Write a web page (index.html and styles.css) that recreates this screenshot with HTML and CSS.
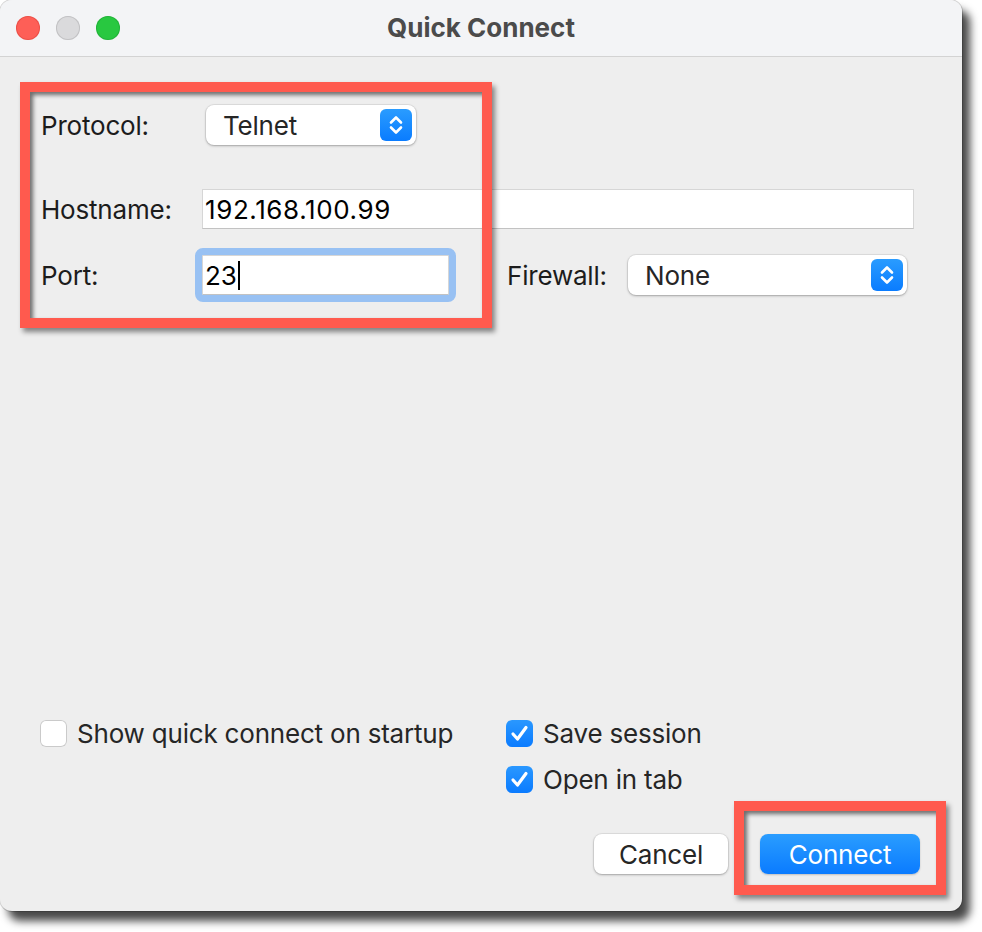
FILE: index.html
```html
<!DOCTYPE html>
<html>
<head>
<meta charset="utf-8">
<link rel="stylesheet" href="styles.css">
</head>
<body>
<div class="window">
  <div class="titlebar">
    <div class="lights">
      <span class="light red"></span>
      <span class="light gray"></span>
      <span class="light green"></span>
    </div>
    <div class="title">Quick Connect</div>
    <div></div>
  </div>
  <div class="content">
    <div class="row row1">
      <span class="label">Protocol:</span>
      <div class="popup popup-protocol">
        <span class="popup-text">Telnet</span>
        <span class="stepper"><svg width="32" height="32" viewBox="0 0 32 32"><path d="M11 13.5 L16 8.5 L21 13.5 M11 18.5 L16 23.5 L21 18.5" fill="none" stroke="#fff" stroke-width="2.6" stroke-linecap="round" stroke-linejoin="round"/></svg></span>
      </div>
    </div>
    <div class="row row2">
      <span class="label">Hostname:</span>
      <div class="field field-host">192.168.100.99</div>
    </div>
    <div class="row row3">
      <span class="label">Port:</span>
      <div class="field field-port focused">23<span class="caret"></span></div>
      <span class="label label-fw">Firewall:</span>
      <div class="popup popup-fw">
        <span class="popup-text">None</span>
        <span class="stepper"><svg width="32" height="32" viewBox="0 0 32 32"><path d="M11 13.5 L16 8.5 L21 13.5 M11 18.5 L16 23.5 L21 18.5" fill="none" stroke="#fff" stroke-width="2.6" stroke-linecap="round" stroke-linejoin="round"/></svg></span>
      </div>
    </div>

    <div class="bottom">
      <div class="checks">
        <label class="check"><span class="box"></span><span>Show quick connect on startup</span></label>
        <label class="check"><span class="box on"><svg width="27" height="27" viewBox="0 0 27 27"><path d="M7 14 L11.5 19 L20 7.5" fill="none" stroke="#fff" stroke-width="3.2" stroke-linecap="round" stroke-linejoin="round"/></svg></span><span>Save session</span></label>
        <span></span>
        <label class="check"><span class="box on"><svg width="27" height="27" viewBox="0 0 27 27"><path d="M7 14 L11.5 19 L20 7.5" fill="none" stroke="#fff" stroke-width="3.2" stroke-linecap="round" stroke-linejoin="round"/></svg></span><span>Open in tab</span></label>
      </div>
      <div class="buttons">
        <button class="btn btn-cancel">Cancel</button>
        <button class="btn btn-connect">Connect</button>
      </div>
    </div>
  </div>
  <div class="mark mark-form"></div>
  <div class="mark mark-connect"></div>
</div>
</body>
</html>
```
FILE: styles.css
```css
* { box-sizing: border-box; }
html, body { margin: 0; padding: 0; background: #ffffff; }
body {
  width: 982px;
  height: 932px;
  font-family: Inter, "Noto Sans", "Liberation Sans", sans-serif;
  font-size: 26px;
  letter-spacing: -0.2px;
  color: #1e1e1e;
}
.window {
  position: relative;
  width: 962px;
  height: 911px;
  border-radius: 12px;
  background: #eeeeee;
  box-shadow: 0 0 0 1px rgba(0,0,0,0.16), 8px 10px 8px rgba(0,0,0,0.72);
  display: flex;
  flex-direction: column;
}
.titlebar {
  height: 57px;
  flex: none;
  background: #f3f4f6;
  border-bottom: 1px solid #d3d3d3;
  border-radius: 12px 12px 0 0;
  display: grid;
  grid-template-columns: 1fr auto 1fr;
  align-items: center;
}
.lights {
  display: flex;
  gap: 16px;
  padding-left: 16px;
}
.light {
  width: 24px;
  height: 24px;
  border-radius: 50%;
  display: block;
}
.light.red { background: #fe5f57; box-shadow: inset 0 0 0 1px rgba(200,50,40,0.35); }
.light.gray { background: #dadadc; box-shadow: inset 0 0 0 1px #c2c2c4; }
.light.green { background: #28c840; box-shadow: inset 0 0 0 1px rgba(20,140,40,0.35); }
.title {
  font-weight: 700;
  font-size: 26px;
  color: #4b4b4b;
  letter-spacing: 0;
  padding-bottom: 2px;
}
.content {
  flex: 1;
  display: flex;
  flex-direction: column;
  padding: 48px 0 0 41px;
}
.row {
  display: flex;
  align-items: center;
  height: 40px;
}
.row2 { margin-top: 44px; }
.row3 { margin-top: 26px; }
.label {
  width: 161px;
  flex: none;
  color: #1c1c1c;
}
.popup {
  height: 40px;
  background: #ffffff;
  border-radius: 8px;
  box-shadow: 0 0 0 1px rgba(0,0,0,0.06), 0 1px 2.5px rgba(0,0,0,0.28);
  display: flex;
  align-items: center;
  justify-content: space-between;
  padding: 0 4px 0 17px;
  color: #262626;
}
.popup-protocol { width: 210px; margin-left: 4px; }
.popup-fw { width: 279px; }
.stepper {
  width: 32px;
  height: 32px;
  border-radius: 6px;
  background: linear-gradient(#2a9cff, #0a7cff);
  display: block;
}
.stepper svg { display: block; }
.field {
  height: 40px;
  background: #ffffff;
  border: 1px solid #d6d6d6;
  border-bottom-color: #c2c2c2;
  display: flex;
  align-items: center;
  padding-left: 2px;
  color: #000000;
}
.field-host { width: 712px; letter-spacing: 0.6px; }
.field-port {
  width: 247px;
  outline: 7px solid #98c1f3;
  outline-offset: 0;
  border-radius: 1px;
}
.caret {
  display: inline-block;
  width: 2px;
  height: 29px;
  background: #000;
  margin-left: 1px;
}
.label-fw {
  width: 121px;
  margin-left: 58px;
}
.bottom {
  margin-top: auto;
  margin-left: -1px;
  padding-bottom: 37px;
  padding-right: 42px;
}
.checks {
  display: grid;
  grid-template-columns: 466px auto;
  row-gap: 19px;
}
.check {
  display: flex;
  align-items: center;
  gap: 10px;
  height: 27px;
  color: #262626;
}
.box {
  width: 27px;
  height: 27px;
  border-radius: 6px;
  background: #ffffff;
  box-shadow: inset 0 0 0 1px #cacaca;
  flex: none;
}
.box.on {
  background: linear-gradient(#2a98ff, #0a7bff);
  box-shadow: none;
}
.box svg { display: block; }
.buttons {
  display: flex;
  justify-content: flex-end;
  gap: 32px;
  margin-top: 41px;
}
.btn {
  font-family: inherit;
  font-size: 26px;
  letter-spacing: inherit;
  height: 40px;
  border: none;
  border-radius: 8px;
  padding: 0;
  display: flex;
  align-items: center;
  justify-content: center;
}
.btn-cancel {
  width: 134px;
  background: #ffffff;
  color: #262626;
  box-shadow: 0 0 0 1px rgba(0,0,0,0.06), 0 1px 2.5px rgba(0,0,0,0.28);
}
.btn-connect {
  width: 160px;
  background: linear-gradient(#2a9dff, #0a7bff);
  color: #ffffff;
  box-shadow: 0 1px 2px rgba(0,0,0,0.2);
}
.mark {
  position: absolute;
  border: 10px solid #ff5a4e;
  box-shadow: 3px 4px 5px rgba(0,0,0,0.45), inset 3px 3px 4px rgba(0,0,0,0.55);
}
.mark-form { left: 20px; top: 82px; width: 472px; height: 246px; }
.mark-connect { left: 734px; top: 801px; width: 212px; height: 94px; }
```
